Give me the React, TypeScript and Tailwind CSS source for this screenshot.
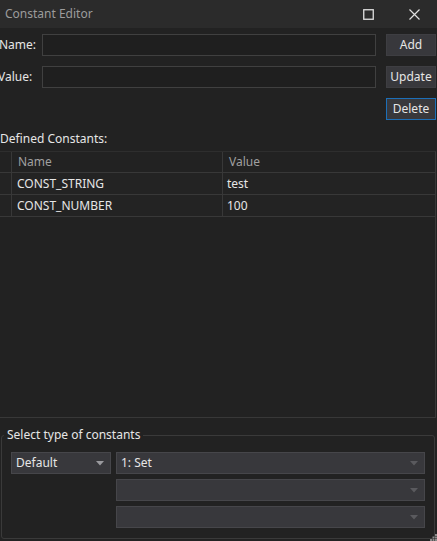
import React from 'react';

const font = { fontFamily: '"Noto Sans", "Open Sans", sans-serif' };

const Caret: React.FC<{ dim?: boolean }> = ({ dim }) => (
    <svg width="8" height="5" viewBox="0 0 8 5" className="shrink-0">
        <path d="M0 0 L8 0 L4 4.5 Z" fill={dim ? '#5a5a5e' : '#9a9a9e'} />
    </svg>
);

const Combo: React.FC<{ label?: string; className?: string; dim?: boolean }> = ({ label, className, dim }) => (
    <div
        className={`h-[22px] flex items-center justify-between pl-[4px] pr-[6px] bg-[#38383c] border border-[#46464a] text-[12px] text-[#e6e6e6] ${className ?? ''}`}
    >
        <span>{label}</span>
        <Caret dim={dim} />
    </div>
);

const rows = [
    { name: 'CONST_STRING', value: 'test' },
    { name: 'CONST_NUMBER', value: '100' },
];

export default function App() {
    return (
        <div style={font} className="w-[437px] h-[541px] bg-[#222222] flex flex-col overflow-hidden text-[12px] text-[#e6e6e6] relative">
            {/* Title bar */}
            <div className="h-[28px] shrink-0 bg-[#2b2b2b] flex items-center pl-[5px]">
                <span className="text-[#9c9c9c] text-[12px] flex-1">Constant Editor</span>
                <div className="w-[46px] h-full flex items-center justify-center">
                    <svg width="11" height="11" viewBox="0 0 11 11">
                        <rect x="0.75" y="0.75" width="9.5" height="9.5" fill="none" stroke="#e0e0e0" strokeWidth="1.3" />
                    </svg>
                </div>
                <div className="w-[46px] h-full flex items-center justify-center">
                    <svg width="11" height="11" viewBox="0 0 11 11">
                        <path d="M0.5 0.5 L10.5 10.5 M10.5 0.5 L0.5 10.5" stroke="#e0e0e0" strokeWidth="1.2" />
                    </svg>
                </div>
            </div>

            {/* Inputs */}
            <div className="flex flex-col gap-[10px] mt-[6px] pr-[1px]">
                <div className="flex items-center h-[22px]">
                    <span className="w-[43px] -ml-[1px] shrink-0">Name:</span>
                    <div className="flex-1 h-[22px] bg-[#1f1f1f] border border-[#404040]" />
                    <button className="ml-[10px] w-[50px] h-[22px] bg-[#38383c] border border-[#3e3e42] text-[#e6e6e6] text-[12px]">Add</button>
                </div>
                <div className="flex items-center h-[22px]">
                    <span className="w-[44px] -ml-[2px] shrink-0">Value:</span>
                    <div className="flex-1 h-[22px] bg-[#1f1f1f] border border-[#404040]" />
                    <button className="ml-[10px] w-[50px] h-[22px] bg-[#38383c] border border-[#3e3e42] text-[#e6e6e6] text-[12px] whitespace-nowrap overflow-visible">
                        Update
                    </button>
                </div>
                <div className="flex justify-end h-[22px]">
                    <button className="w-[50px] h-[22px] bg-[#38383c] border border-[#1c6fb8] text-[#e6e6e6] text-[12px]">Delete</button>
                </div>
            </div>

            <div className="mt-[10px] h-[17px] leading-[17px]">Defined Constants:</div>

            {/* Grid */}
            <div className="mt-[4px] w-[436px] h-[267px] border-r border-b border-[#383838] border-t border-t-[#2e2e2e] flex flex-col">
                <div className="flex h-[21px] border-b border-[#383838] text-[#a0a0a0]">
                    <div className="w-[12px] border-r border-[#383838]" />
                    <div className="w-[211px] pl-[6px] border-r border-[#383838] leading-[20px]">Name</div>
                    <div className="flex-1 pl-[6px] leading-[20px]">Value</div>
                </div>
                {rows.map((r) => (
                    <div key={r.name} className="flex h-[22px] border-b border-[#383838] bg-[#232323]">
                        <div className="w-[12px] border-r border-[#383838]" />
                        <div className="w-[211px] pl-[5px] border-r border-[#383838] leading-[21px]">{r.name}</div>
                        <div className="flex-1 pl-[4px] leading-[21px]">{r.value}</div>
                    </div>
                ))}
            </div>

            {/* Group box */}
            <fieldset className="mt-[9px] ml-[1px] w-[433px] h-[112px] border border-[#3a3a3a] rounded-[3px] px-[9px]">
                <legend className="ml-[-7px] px-[3px] text-[12px] text-[#e6e6e6] leading-[16px]">Select type of constants</legend>
                <div className="flex gap-[5px] mt-[9px]">
                    <Combo label="Default" className="w-[100px]" />
                    <div className="flex flex-col gap-[5px] w-[309px]">
                        <Combo label="1: Set" dim />
                        <Combo dim />
                        <Combo dim />
                    </div>
                </div>
            </fieldset>

            {/* Resize grip */}
            <svg width="7" height="7" viewBox="0 0 7 7" className="absolute right-0 bottom-0">
                <rect x="5" y="0" width="2" height="2" fill="#8a8a8a" />
                <rect x="2.5" y="2.5" width="2" height="2" fill="#8a8a8a" />
                <rect x="5" y="2.5" width="2" height="2" fill="#8a8a8a" />
                <rect x="0" y="5" width="2" height="2" fill="#8a8a8a" />
                <rect x="2.5" y="5" width="2" height="2" fill="#8a8a8a" />
                <rect x="5" y="5" width="2" height="2" fill="#8a8a8a" />
            </svg>
        </div>
    );
}
